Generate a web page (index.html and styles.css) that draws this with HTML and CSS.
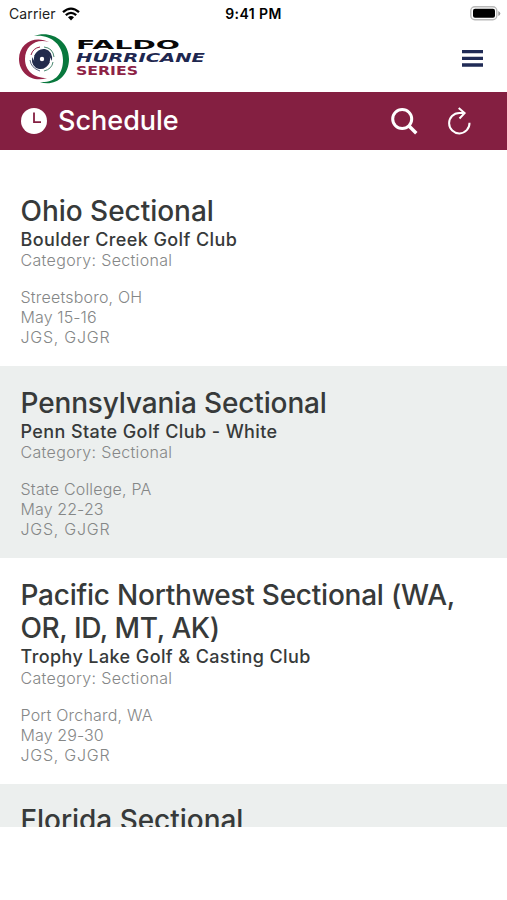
FILE: index.html
```html
<!DOCTYPE html>
<html lang="en">
<head>
<meta charset="utf-8">
<meta name="viewport" content="width=device-width">
<title>Schedule</title>
<link rel="stylesheet" href="styles.css">
</head>
<body>
<div class="status">
  <div class="carrier"><span>Carrier</span>
    <svg width="18" height="14" viewBox="0 0 18 14" fill="none" stroke="#000" stroke-width="2.3"><path d="M1 5.2Q9-2 17 5.2M3.8 8.2Q9 3.5 14.2 8.2"/><path d="M6 10.3Q9 7.8 12 10.3L9 13.4Z" fill="#000" stroke="none"/></svg>
  </div>
  <time class="time">9:41 PM</time>
  <svg class="battery" width="31" height="15" viewBox="0 0 31 15"><rect x=".8" y=".8" width="26" height="13" rx="4" fill="#fff" stroke="#b9b9b9" stroke-width="1.4"/><rect x="3" y="2.8" width="22" height="9" rx="2" fill="#000"/><path d="M28.3 5v5q2-1 2-2.5T28.3 5" fill="#999"/></svg>
</div>
<header class="brand">
  <svg class="logo" width="192" height="52" viewBox="0 0 192 52" role="img" aria-label="Faldo Hurricane Series">
    <path d="M16 3C31-3 51 6 51 26C51 44 36 54 22 49C37 50 45 41 45 27C45 11 32 1 16 3Z" fill="#08783d"/>
    <path d="M31 9C17 2 1 10 1 26C1 40 14 50 29 45C16 45 7 38 7 26C7 13 18 5 31 9Z" fill="#962347"/>
    <circle cx="24" cy="26" r="5.2" fill="#fff" stroke="#222b4c" stroke-width="6"/>
    <path d="M16 23Q20 15 27 16Q35 18 34 28Q31 21 25 20ZM32 29Q28 37 21 36Q13 34 14 24Q17 31 23 32Z" fill="#222b4c"/>
    <path d="M26 14Q35 15 36 24M35 29Q34 36 26 38" fill="none" stroke="#4a8870" stroke-width="1"/>
    <path d="M13 22Q15 15 22 14" fill="none" stroke="#962347" stroke-width="1"/>
    <path d="M12 27Q13 35 22 38" fill="none" stroke="#59627e" stroke-width="1"/>
    <g class="logo-text">
      <text x="58" y="15.5" font-size="12" fill="#080808" textLength="104" lengthAdjust="spacingAndGlyphs">FALDO</text>
      <text x="58" y="29.3" font-size="11.5" font-style="italic" fill="#1e2750" textLength="129" lengthAdjust="spacingAndGlyphs">HURRICANE</text>
      <text x="58" y="41.8" font-size="11.5" fill="#8d2346" textLength="62" lengthAdjust="spacingAndGlyphs">SERIES</text>
    </g>
  </svg>
  <svg class="menu" width="21" height="17" viewBox="0 0 21 17" fill="#202b56"><path d="M0 0h21v3.3H0zM0 6.7h21V10H0zM0 13.3h21v3.4H0z"/></svg>
</header>
<div class="titlebar">
  <svg class="clock" width="26" height="26" viewBox="0 0 26 26"><circle cx="13" cy="13" r="13" fill="#fff"/><path d="M13 4.5v9.7h7" fill="none" stroke="#841f41" stroke-width="1.8"/></svg>
  <h1>Schedule</h1>
  <svg class="search" width="27" height="27" viewBox="0 0 27 27" fill="none" stroke="#fff" stroke-width="3"><circle cx="11.2" cy="11" r="9.5"/><path d="M18 18l7.3 7.2" stroke-width="3.5"/></svg>
  <svg class="refresh" width="23" height="28" viewBox="0 0 23 28" fill="none" stroke="#fff" stroke-width="2"><path d="M21.5 15.8A10.2 10.2 0 1 1 11.3 6H15M10.7 1L16.6 6.1L11.5 11.5"/></svg>
</div>
<main class="list">
  <article class="event">
    <h2 class="short">Ohio Sectional</h2>
    <h3>Boulder Creek Golf Club</h3>
    <p class="category">Category: Sectional</p>
    <div class="details"><p class="place">Streetsboro, OH</p><p class="dates">May 15-16</p><p class="tours">JGS, GJGR</p></div>
  </article>
  <article class="event">
    <h2>Pennsylvania Sectional</h2>
    <h3>Penn State Golf Club - White</h3>
    <p class="category">Category: Sectional</p>
    <div class="details"><p class="place">State College, PA</p><p class="dates">May 22-23</p><p class="tours">JGS, GJGR</p></div>
  </article>
  <article class="event">
    <h2 class="long">Pacific Northwest Sectional (WA,<br><span>OR, ID, MT, AK)</span></h2>
    <h3>Trophy Lake Golf &amp; Casting Club</h3>
    <p class="category">Category: Sectional</p>
    <div class="details"><p class="place">Port Orchard, WA</p><p class="dates">May 29-30</p><p class="tours">JGS, GJGR</p></div>
  </article>
  <article class="event"><h2 class="short">Florida Sectional</h2></article>
</main>
</body>
</html>
```
FILE: styles.css
```css
* { box-sizing: border-box; }
body { margin: 0; height: 900px; overflow: hidden; background: #fff; color: #373a3a; font-family: Inter, sans-serif; }
h1, h2, h3, p { margin: 0; }
svg { display: block; flex: none; }

.status { display: grid; grid-template-columns: 1fr auto 1fr; align-items: center; height: 27px; padding: 0 6px 0 9px; font-size: 14px; color: #222; }
.carrier { display: flex; align-items: center; gap: 6px; letter-spacing: .1px; }
.time { margin-right: 3px; color: #000; font-weight: 600; font-size: 14px; letter-spacing: .4px; }
.battery { justify-self: end; }

.brand { display: flex; justify-content: space-between; align-items: flex-start; height: 65px; padding: 6px 24px 0 18px; }
.logo-text { font-family: "DejaVu Sans", sans-serif; font-weight: 700; }
.menu { margin-top: 17px; }

.titlebar { display: flex; align-items: center; height: 58px; padding: 0 36px 0 21px; background: #841f41; color: #fff; }
.titlebar h1 { margin-left: 11px; font-size: 27px; font-weight: 500; line-height: 34px; }
.search { margin-left: auto; }
.refresh { margin-left: 30px; }

.list { height: 677px; padding-top: 24.4px; overflow: hidden; }
.event { padding: 20.5px 20px 19px 20.5px; }
.event:nth-child(even) { background: #ecefee; }
.event h2 { font-size: 28px; font-weight: 500; line-height: 33.6px; letter-spacing: -.15px; white-space: nowrap; }
.event h2.short { letter-spacing: -.03px; }
.event h2.long { letter-spacing: -.23px; }
.event h2.long span { letter-spacing: -.43px; }
.event h3 { padding-top: .6px; font-size: 18px; font-weight: 500; line-height: 21.2px; letter-spacing: .4px; white-space: nowrap; }
.event p { font-size: 16px; font-weight: 300; line-height: 20px; color: #858787; }
.event .category { letter-spacing: .33px; }
.details { margin-top: 17px; }
.event .place { letter-spacing: .2px; }
.event .dates { letter-spacing: .1px; }
.event .tours { letter-spacing: .75px; }
```
